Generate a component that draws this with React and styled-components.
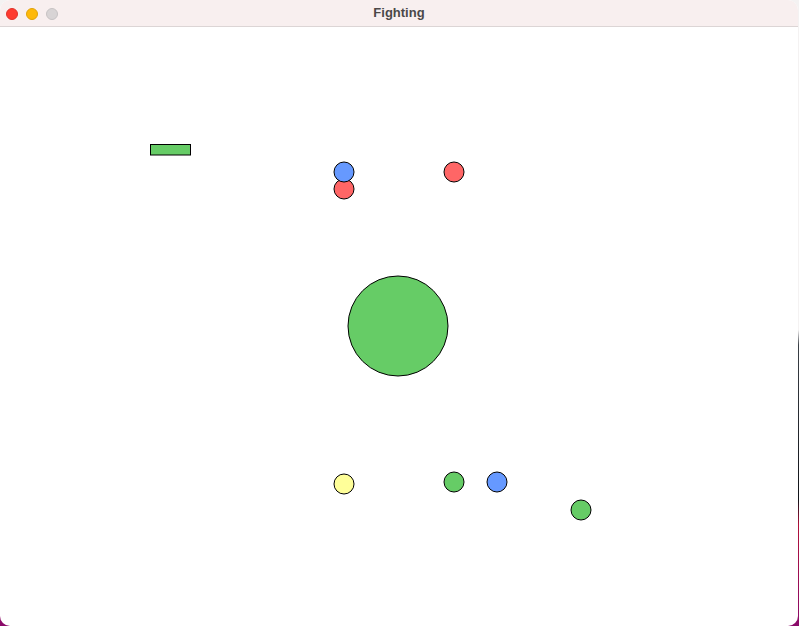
import React from 'react'
import styled, { createGlobalStyle } from 'styled-components'

const GlobalStyle = createGlobalStyle`
  html, body {
    margin: 0;
    padding: 0;
  }
  body {
    width: 799px;
    height: 626px;
    overflow: hidden;
    background: linear-gradient(
      180deg,
      #f4f2f2 0px,
      #f4f2f2 330px,
      #3a3f46 345px,
      #111318 500px,
      #b0103a 525px,
      #8a0a6a 626px
    );
  }
`

const colors = {
  green: '#66cc66',
  red: '#ff6666',
  blue: '#6699ff',
  yellow: '#ffff99',
}

const Window = styled.div`
  width: 798px;
  height: 626px;
  display: flex;
  flex-direction: column;
  background: #ffffff;
  border-radius: 10px;
  overflow: hidden;
  font-family: 'Liberation Sans', Arial, sans-serif;
`
const TitleBar = styled.div`
  height: 26px;
  flex: none;
  display: flex;
  align-items: center;
  position: relative;
  background: #f8efef;
  border-bottom: 1px solid #dcd5d5;
`
const Lights = styled.div`
  display: flex;
  gap: 8px;
  padding-left: 6px;
  padding-top: 1px;
`
const Light = styled.span`
  width: 12px;
  height: 12px;
  border-radius: 50%;
  box-sizing: border-box;
  background: ${p => p.color};
  border: 0.5px solid ${p => p.edge};
`
const Title = styled.div`
  position: absolute;
  left: 0;
  right: 0;
  top: 5px;
  text-align: center;
  font-size: 13px;
  font-weight: bold;
  color: #4b4848;
  line-height: 15px;
`
const Canvas = styled.svg`
  display: block;
  flex: 1;
  width: 798px;
`

// scene coordinates in window pixels; shifted up by the title bar in the svg
const balls = [
  { x: 344, y: 189, r: 10, fill: colors.red },
  { x: 344, y: 172, r: 10, fill: colors.blue },
  { x: 454, y: 172, r: 10, fill: colors.red },
  { x: 398, y: 326, r: 50, fill: colors.green },
  { x: 344, y: 484, r: 10, fill: colors.yellow },
  { x: 454, y: 482, r: 10, fill: colors.green },
  { x: 497, y: 482, r: 10, fill: colors.blue },
  { x: 581, y: 510, r: 10, fill: colors.green },
]

const TOP = 27

export default function App() {
  return (
    <>
      <GlobalStyle />
      <Window>
        <TitleBar>
          <Lights>
            <Light color='#fe3b30' edge='#e0322a' />
            <Light color='#feb90a' edge='#e0a208' />
            <Light color='#d8d4d5' edge='#c6c2c3' />
          </Lights>
          <Title>Fighting</Title>
        </TitleBar>
        <Canvas viewBox={`0 ${TOP} 798 ${626 - TOP}`}>
          <rect
            x='150.5'
            y='144.5'
            width='40'
            height='10.5'
            fill={colors.green}
            stroke='#000'
            strokeWidth='1'
          />
          {balls.map((b, i) => (
            <circle
              key={i}
              cx={b.x}
              cy={b.y}
              r={b.r}
              fill={b.fill}
              stroke='#000'
              strokeWidth='1'
            />
          ))}
        </Canvas>
      </Window>
    </>
  )
}
